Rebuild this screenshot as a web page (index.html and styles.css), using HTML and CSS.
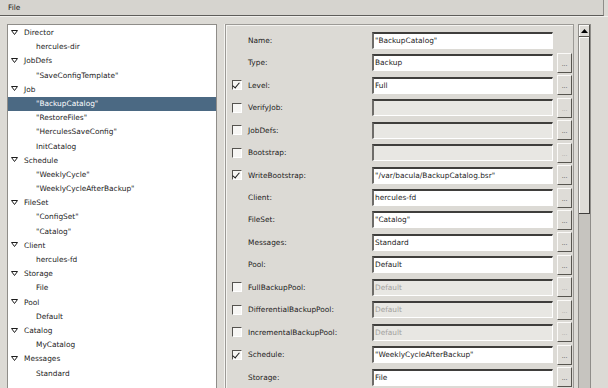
FILE: index.html
```html
<!DOCTYPE html>
<html>
<head>
    <link rel="stylesheet" href="styles.css">
    <title>Bacula Configuration</title>
</head>
<body>
    <div class="menubar"><span class="menu-item">File</span></div>

    <div class="main">
        <div class="tree">
            <div class="node"><svg class="tri" width="7" height="5" viewBox="0 0 7 5"><polygon points="0.5,0.5 6.5,0.5 3.5,4.5" fill="#fff" stroke="#1c1c1c" stroke-width="1"/></svg>Director</div>
            <div class="leaf">hercules-dir</div>
            <div class="node"><svg class="tri" width="7" height="5" viewBox="0 0 7 5"><polygon points="0.5,0.5 6.5,0.5 3.5,4.5" fill="#fff" stroke="#1c1c1c" stroke-width="1"/></svg>JobDefs</div>
            <div class="leaf">"SaveConfigTemplate"</div>
            <div class="node"><svg class="tri" width="7" height="5" viewBox="0 0 7 5"><polygon points="0.5,0.5 6.5,0.5 3.5,4.5" fill="#fff" stroke="#1c1c1c" stroke-width="1"/></svg>Job</div>
            <div class="leaf selected">"BackupCatalog"</div>
            <div class="leaf">"RestoreFiles"</div>
            <div class="leaf">"HerculesSaveConfig"</div>
            <div class="leaf">InitCatalog</div>
            <div class="node"><svg class="tri" width="7" height="5" viewBox="0 0 7 5"><polygon points="0.5,0.5 6.5,0.5 3.5,4.5" fill="#fff" stroke="#1c1c1c" stroke-width="1"/></svg>Schedule</div>
            <div class="leaf">"WeeklyCycle"</div>
            <div class="leaf">"WeeklyCycleAfterBackup"</div>
            <div class="node"><svg class="tri" width="7" height="5" viewBox="0 0 7 5"><polygon points="0.5,0.5 6.5,0.5 3.5,4.5" fill="#fff" stroke="#1c1c1c" stroke-width="1"/></svg>FileSet</div>
            <div class="leaf">"ConfigSet"</div>
            <div class="leaf">"Catalog"</div>
            <div class="node"><svg class="tri" width="7" height="5" viewBox="0 0 7 5"><polygon points="0.5,0.5 6.5,0.5 3.5,4.5" fill="#fff" stroke="#1c1c1c" stroke-width="1"/></svg>Client</div>
            <div class="leaf">hercules-fd</div>
            <div class="node"><svg class="tri" width="7" height="5" viewBox="0 0 7 5"><polygon points="0.5,0.5 6.5,0.5 3.5,4.5" fill="#fff" stroke="#1c1c1c" stroke-width="1"/></svg>Storage</div>
            <div class="leaf">File</div>
            <div class="node"><svg class="tri" width="7" height="5" viewBox="0 0 7 5"><polygon points="0.5,0.5 6.5,0.5 3.5,4.5" fill="#fff" stroke="#1c1c1c" stroke-width="1"/></svg>Pool</div>
            <div class="leaf">Default</div>
            <div class="node"><svg class="tri" width="7" height="5" viewBox="0 0 7 5"><polygon points="0.5,0.5 6.5,0.5 3.5,4.5" fill="#fff" stroke="#1c1c1c" stroke-width="1"/></svg>Catalog</div>
            <div class="leaf">MyCatalog</div>
            <div class="node"><svg class="tri" width="7" height="5" viewBox="0 0 7 5"><polygon points="0.5,0.5 6.5,0.5 3.5,4.5" fill="#fff" stroke="#1c1c1c" stroke-width="1"/></svg>Messages</div>
            <div class="leaf">Standard</div>
        </div>

        <div class="splitter"></div>

        <div class="editor">
            <div class="row">
                <span class="check none"></span>
                <span class="label">Name:</span>
                <span class="field">"BackupCatalog"</span>
            </div>
            <div class="row">
                <span class="check none"></span>
                <span class="label">Type:</span>
                <span class="field">Backup</span>
                <span class="dots">...</span>
            </div>
            <div class="row">
                <span class="check on"></span>
                <span class="label">Level:</span>
                <span class="field">Full</span>
                <span class="dots">...</span>
            </div>
            <div class="row">
                <span class="check"></span>
                <span class="label">VerifyJob:</span>
                <span class="field disabled"></span>
                <span class="dots off">...</span>
            </div>
            <div class="row">
                <span class="check"></span>
                <span class="label">JobDefs:</span>
                <span class="field disabled"></span>
                <span class="dots">...</span>
            </div>
            <div class="row">
                <span class="check"></span>
                <span class="label">Bootstrap:</span>
                <span class="field disabled"></span>
                <span class="dots off">...</span>
            </div>
            <div class="row">
                <span class="check on"></span>
                <span class="label">WriteBootstrap:</span>
                <span class="field">"/var/bacula/BackupCatalog.bsr"</span>
                <span class="dots">...</span>
            </div>
            <div class="row">
                <span class="check none"></span>
                <span class="label">Client:</span>
                <span class="field">hercules-fd</span>
                <span class="dots">...</span>
            </div>
            <div class="row">
                <span class="check none"></span>
                <span class="label">FileSet:</span>
                <span class="field">"Catalog"</span>
                <span class="dots">...</span>
            </div>
            <div class="row">
                <span class="check none"></span>
                <span class="label">Messages:</span>
                <span class="field">Standard</span>
                <span class="dots">...</span>
            </div>
            <div class="row">
                <span class="check none"></span>
                <span class="label">Pool:</span>
                <span class="field">Default</span>
                <span class="dots">...</span>
            </div>
            <div class="row">
                <span class="check"></span>
                <span class="label">FullBackupPool:</span>
                <span class="field disabled">Default</span>
                <span class="dots off">...</span>
            </div>
            <div class="row">
                <span class="check"></span>
                <span class="label">DifferentialBackupPool:</span>
                <span class="field disabled">Default</span>
                <span class="dots off">...</span>
            </div>
            <div class="row">
                <span class="check"></span>
                <span class="label">IncrementalBackupPool:</span>
                <span class="field disabled">Default</span>
                <span class="dots off">...</span>
            </div>
            <div class="row">
                <span class="check on"></span>
                <span class="label">Schedule:</span>
                <span class="field">"WeeklyCycleAfterBackup"</span>
                <span class="dots">...</span>
            </div>
            <div class="row">
                <span class="check none"></span>
                <span class="label">Storage:</span>
                <span class="field">File</span>
                <span class="dots">...</span>
            </div>
        </div>

        <div class="scrollbar">
            <div class="arrow">
                <svg width="7" height="4" viewBox="0 0 7 4"><polygon points="0,4 3.5,0 7,4" fill="#000"/></svg>
            </div>
            <div class="thumb"></div>
            <div class="trough"></div>
        </div>
    </div>
</body>
</html>
```

FILE: styles.css
```css
body {
    margin: 0;
    background-color: #dcdad5;
    font-family: "DejaVu Sans", sans-serif;
    font-size: 7.4px;
    color: #1c1c1c;
    width: 608px;
    height: 388px;
    overflow: hidden;
}

.menubar {
    width: 603px;
    height: 15px;
    background-color: #d6d4cf;
    border-right: 1px solid #8f8d89;
    border-bottom: 1px solid #5e5d5a;
    display: flex;
    align-items: center;
}

.menu-item {
    padding-left: 8px;
}

.main {
    display: flex;
    padding: 7px 0 0 7px;
    height: 365px;
    border-top: 1px solid #f0efec;
}

/* left tree */

.tree {
    width: 208px;
    background-color: #fff;
    border: 1px solid #8f8d89;
    border-bottom: none;
    padding-top: 1px;
    overflow: hidden;
}

.node,
.leaf {
    height: 14.2px;
    line-height: 14.2px;
    white-space: nowrap;
}

.node {
    display: flex;
    align-items: center;
    padding-left: 3px;
}

.leaf {
    padding-left: 28px;
}

.selected {
    background-color: #4b6983;
    color: #fff;
}

.tri {
    margin-right: 6px;
    margin-top: -2px;
    flex-shrink: 0;
}

.splitter {
    width: 7px;
    border-right: 1px solid #f4f3f0;
}

/* right editor */

.editor {
    width: 349px;
    border: 1px solid #9c9a96;
    border-bottom: none;
    box-shadow: inset 1px 1px 0 #f4f3f0;
    padding: 4px 0 0 6px;
    box-sizing: border-box;
    height: 365px;
    overflow: hidden;
    flex-shrink: 0;
}

.row {
    height: 22.47px;
    display: flex;
    align-items: center;
}

.check {
    width: 10px;
    height: 10px;
    box-sizing: border-box;
    border: 1px solid;
    border-color: #55534f #ffffff #ffffff #55534f;
    background-color: #f7f6f4;
    position: relative;
    flex-shrink: 0;
}

.check.none {
    visibility: hidden;
}

.check.on::after {
    content: "";
    position: absolute;
    left: 1px;
    top: 0px;
    width: 3px;
    height: 6px;
    border-right: 1.3px solid #1c1c1c;
    border-bottom: 1.3px solid #1c1c1c;
    transform: rotate(40deg);
}

.label {
    width: 124px;
    padding-left: 6px;
    white-space: nowrap;
}

.field {
    width: 181px;
    height: 17px;
    box-sizing: border-box;
    border-style: solid;
    border-width: 2px 1px 1px 2px;
    border-color: #3f3e3c #ffffff #ffffff #6e6c69;
    background-color: #fff;
    padding-left: 1px;
    line-height: 13px;
    white-space: nowrap;
    overflow: hidden;
}

.field.disabled {
    background-color: #e8e7e3;
    color: #a3a19d;
}

.dots {
    width: 15px;
    height: 20px;
    margin-left: 4px;
    box-sizing: border-box;
    border: 1px solid;
    border-color: #fbfaf8 #57554f #57554f #fbfaf8;
    background-color: #dedcd7;
    text-align: center;
    line-height: 19px;
    font-size: 6px;
    color: #333;
}

.dots.off {
    color: #a3a19d;
}

/* scrollbar */

.scrollbar {
    width: 13px;
    margin-left: 4px;
    border: 1px solid #8f8d89;
    border-bottom: none;
    display: flex;
    flex-direction: column;
    background-color: #c6c4bf;
    box-sizing: border-box;
}

.arrow {
    height: 11px;
    background-color: #dedcd7;
    border-right: 1px solid #57554f;
    border-bottom: 1px solid #57554f;
    box-shadow: inset 1px 1px 0 #fbfaf8;
    display: flex;
    align-items: center;
    justify-content: center;
}

.thumb {
    height: 176px;
    background-color: #dedcd7;
    border-right: 1px solid #3f3e3c;
    border-bottom: 1px solid #3f3e3c;
    box-shadow: inset 1px 1px 0 #fbfaf8;
}

.trough {
    flex: 1;
}
```
